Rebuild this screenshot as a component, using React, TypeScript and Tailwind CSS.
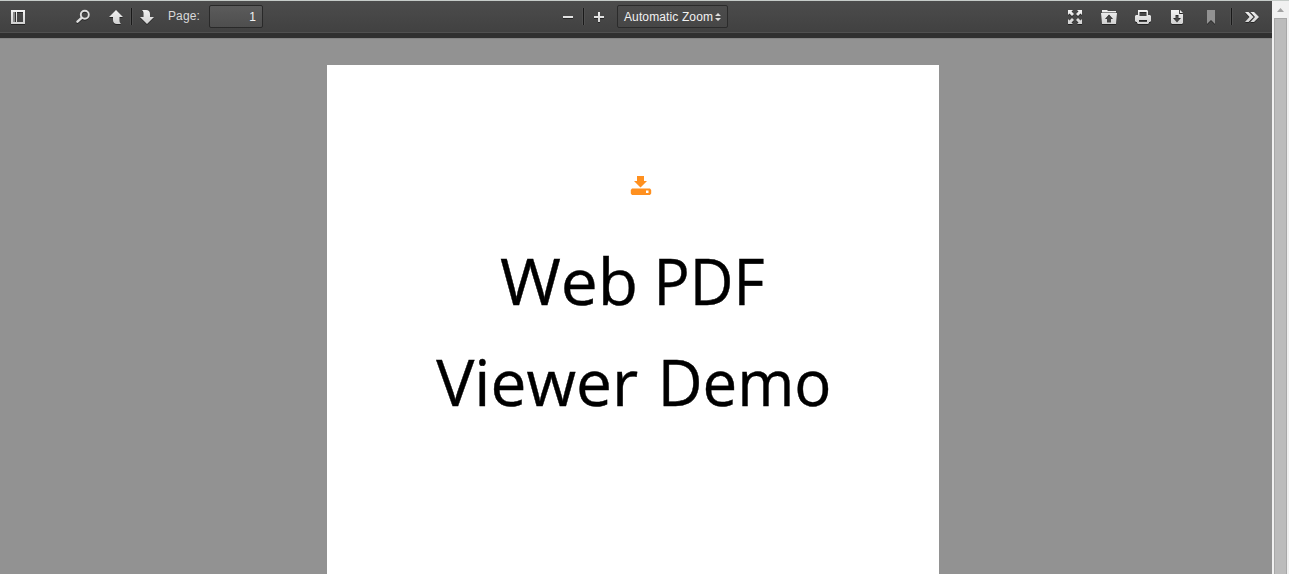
import React from "react";

type IconProps = { children: React.ReactNode; label: string; className?: string };

function IconButton({ children, label, className = "" }: IconProps) {
  return (
    <button aria-label={label} className={`block h-4 w-4 shrink-0 ${className}`}>
      <svg
        width="16"
        height="16"
        viewBox="0 0 16 16"
        fill="url(#iconFill)"
        className="block overflow-visible drop-shadow-[0_1px_0_rgba(0,0,0,0.45)]"
      >
        {children}
      </svg>
    </button>
  );
}

function Separator({ className = "" }: { className?: string }) {
  return (
    <div className={`mb-px h-[17px] w-[3px] shrink-0 border-x border-[#505050] bg-[#191919] ${className}`} />
  );
}

function Toolbar() {
  return (
    <header className="flex h-8 w-full shrink-0 items-center border-b border-[#505050] bg-linear-to-b from-[#4c4c4c] to-[#414141] pt-px">
      <div className="flex w-[560px] shrink-0 items-center pl-[10px]">
        <IconButton label="Toggle sidebar">
          <path fillRule="evenodd" d="M1 1h14v14H1zM3 3v10h2V3zM7 3v10h6V3z" />
          <path d="M3 3h2v10H3z" fill="#888" />
          <path d="M5 3h1v10H5z" fill="#333" />
        </IconButton>
        <IconButton label="Find" className="ml-[50px]">
          <circle cx="8.800" cy="5.800" r="4" fill="none" stroke="#dedede" strokeWidth="1.900" />
          <path d="M5.900 8.700L1.500 12.700" stroke="#dedede" strokeWidth="2.400" strokeLinecap="round" />
        </IconButton>
        <IconButton label="Previous page" className="ml-4">
          <path d="M8 1l7 7h-3.500v3.500c0 1.500.5 2.500 1.500 3.500H9c-2.500 0-4-1.500-4-4V8H1z" />
        </IconButton>
        <Separator className="ml-[6px]" />
        <IconButton label="Next page" className="ml-[6px]">
          <path d="M8 15l7-7h-4V5c0-2.500-1.500-4-4-4H3c1 1 1.500 2 1.500 3.500V8H1z" />
        </IconButton>
        <label className="mb-px ml-[13px] flex items-center text-xs text-[#d9d9d9]">
          <span className="-mt-[2px] w-[41px] tracking-[0.1px]">Page:</span>
          <input
            aria-label="Page number"
            defaultValue="1"
            className="h-[23px] w-[54px] rounded-xs border border-[#292929] bg-linear-to-b from-[#5b5b5b] to-[#4e4e4e] pr-[6px] text-right text-xs text-[#f2f2f2]"
          />
        </label>
      </div>

      <div className="flex flex-1 items-center">
        <IconButton label="Zoom out">
          <path d="M3 7h10v2H3z" />
        </IconButton>
        <Separator className="ml-[6px]" />
        <IconButton label="Zoom in" className="ml-[6px]">
          <path d="M3 7h4V3h2v4h4v2H9v4H7V9H3z" />
        </IconButton>
        <button className="mb-px ml-[10px] flex h-[23px] w-[111px] items-center rounded-xs border border-[#2b2b2b] bg-linear-to-b from-[#4c4c4c] to-[#464646] pl-[6px] text-xs whitespace-nowrap text-[#f2f2f2]">
          <span className="w-[91px] text-left tracking-[0.12px]">Automatic Zoom</span>
          <svg width="6" height="8" viewBox="0 0 6 8" fill="#ddd" className="shrink-0">
            <path d="M3 0l3 3H0zM3 8l3-3H0z" />
          </svg>
        </button>
      </div>

      <div className="flex items-center pr-3">
        <IconButton label="Presentation mode">
          <path d="M1 1h5L4.500 2.500l2.500 2.500-2 2-2.500-2.500L1 6zM10 1h5v5l-1.500-1.500L11 7 9 5l2.500-2.500zM1 15v-5l1.500 1.500L5 9l2 2-2.500 2.500L6 15zM15 15h-5l1.500-1.500L9 11l2-2 2.500 2.500L15 10z" />
        </IconButton>
        <IconButton label="Open file" className="ml-[18px]">
          <path fillRule="evenodd" d="M1 1h5l1 1h8v1.500H1zM0 4h16l-1 11H1zM8 5.500L4 10h2v3.500h4V10h2z" />
        </IconButton>
        <IconButton label="Print" className="ml-[18px]">
          <path fillRule="evenodd" d="M3 1h9l1 1v4h2l1 1v5l-1 1h-1v1l-1 1H3l-1-1v-1H1l-1-1V7l1-1h2zM4.500 3v4h7V3zM4 11v2h8v-2z" />
        </IconButton>
        <IconButton label="Download" className="ml-[18px]">
          <path fillRule="evenodd" d="M2 1h8v4h4v9l-1 1H3l-1-1zM6.500 6v3H4l4 4.500L12 9H9.500V6z" />
          <path d="M11 1l3 3h-3z" />
        </IconButton>
        <IconButton label="Bookmark" className="ml-[18px]">
          <path d="M4 1h8v14l-4-4-4 4z" fill="#929292" />
        </IconButton>
        <Separator className="ml-[11px]" />
        <IconButton label="Tools" className="ml-[11px]">
          <path d="M1 3h3.500l5 5-5 5H1l4.500-5zM6.500 3H10l5 5-5 5H6.500L11 8z" />
        </IconButton>
      </div>
    </header>
  );
}

function DocumentPage() {
  return (
    <article className="flex w-[612px] shrink-0 flex-col items-center bg-white font-['Open_Sans',sans-serif] text-black">
      <svg width="22" height="20" viewBox="0 0 22 20" fill="#ff901f" className="mt-[111px] ml-[15px] shrink-0">
        <path d="M7 0h7v5h3l-6.500 6.500L4 5h3z" />
        <path fillRule="evenodd" d="M2 12.500h18l1.200 1.500v3.500L20 19H2l-1.200-1.500V14zM16 14.500v2.500h2.500v-2.500z" />
      </svg>
      <h1 className="mt-[34px] text-center text-[64px] leading-[101px] font-normal whitespace-nowrap [-webkit-text-stroke:0.400px_black]">
        <span className="block">
          <span className="inline-block translate-x-[3px] scale-x-[1.030]">Web</span>{" "}
          <span className="inline-block translate-x-px scale-x-[0.940]">PDF</span>
        </span>
        <span className="block">
          <span className="inline-block translate-x-[2.500px]">Viewer</span>{" "}
          <span className="inline-block translate-x-[2.500px] scale-x-[0.965]">Demo</span>
        </span>
      </h1>
    </article>
  );
}

export default function App() {
  return (
    <div className="flex h-[574px] w-full overflow-hidden border-t border-[#c6ccc9] bg-[#929292] font-['Liberation_Sans',Arial,sans-serif]">
      <svg width="0" height="0" className="absolute">
        <defs>
          <linearGradient id="iconFill" x1="0" y1="0" x2="0" y2="16" gradientUnits="userSpaceOnUse">
            <stop stopColor="#f6f6f6" />
            <stop offset="1" stopColor="#cecece" />
          </linearGradient>
        </defs>
      </svg>
      <div className="flex min-w-0 flex-1 flex-col">
        <Toolbar />
        <div className="h-[5px] shrink-0 bg-[#303030]" />
        <main className="flex min-h-0 flex-1 justify-center border-t border-[#858585] pt-[26px] pr-[6px]">
          <DocumentPage />
        </main>
      </div>
      <aside className="flex w-[17px] shrink-0 flex-col items-center bg-[#f1f1f1]">
        <svg width="17" height="17" viewBox="0 0 17 17" fill="#a3a3a3" className="shrink-0">
          <path d="M5 11h7L8.500 7z" />
        </svg>
        <div className="w-[13px] flex-1 border border-b-0 border-[#a8a8a8] bg-[#bcbcbc]" />
      </aside>
    </div>
  );
}
